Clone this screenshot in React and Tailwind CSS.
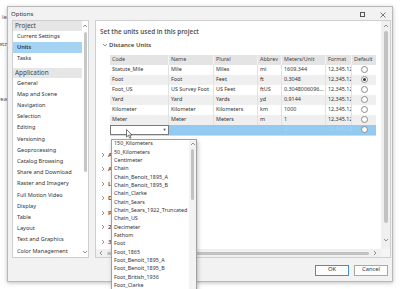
import React from "react";

const navProject = ["Current Settings", "Units", "Tasks"];
const navApp = [
  "General",
  "Map and Scene",
  "Navigation",
  "Selection",
  "Editing",
  "Versioning",
  "Geoprocessing",
  "Catalog Browsing",
  "Share and Download",
  "Raster and Imagery",
  "Full Motion Video",
  "Display",
  "Table",
  "Layout",
  "Text and Graphics",
  "Color Management",
];

const cols = [
  { key: "code", label: "Code", w: "w-[59px]" },
  { key: "name", label: "Name", w: "w-[45px]" },
  { key: "plural", label: "Plural", w: "w-[44px]" },
  { key: "abbr", label: "Abbrev", w: "w-[24px]" },
  { key: "mpu", label: "Meters/Unit", w: "w-[44px]" },
  { key: "fmt", label: "Format", w: "w-[26px]" },
];

const rows = [
  { code: "Statute_Mile", name: "Mile", plural: "Miles", abbr: "mi", mpu: "1609.344" },
  { code: "Foot", name: "Foot", plural: "Feet", abbr: "ft", mpu: "0.3048", def: true },
  { code: "Foot_US", name: "US Survey Foot", plural: "US Feet", abbr: "ftUS", mpu: "0.3048006096..." },
  { code: "Yard", name: "Yard", plural: "Yards", abbr: "yd", mpu: "0.9144" },
  { code: "Kilometer", name: "Kilometer", plural: "Kilometers", abbr: "km", mpu: "1000" },
  { code: "Meter", name: "Meter", plural: "Meters", abbr: "m", mpu: "1" },
];

const otherUnits = ["Angular Units", "Area Units", "Location Units", "Direction Units", "Page Units", "2D Symbol Display Units", "3D Symbol Display Units"];

const dropItems = [
  "150_Kilometers",
  "50_Kilometers",
  "Centimeter",
  "Chain",
  "Chain_Benoit_1895_A",
  "Chain_Benoit_1895_B",
  "Chain_Clarke",
  "Chain_Sears",
  "Chain_Sears_1922_Truncated",
  "Chain_US",
  "Decimeter",
  "Fathom",
  "Foot",
  "Foot_1865",
  "Foot_Benoit_1895_A",
  "Foot_Benoit_1895_B",
  "Foot_British_1936",
  "Foot_Clarke",
];

function Radio({ on }) {
  return (
    <div className="w-[7px] h-[7px] rounded-full border border-[#8a8a8a] bg-white flex items-center justify-center">
      {on && <div className="w-[3px] h-[3px] rounded-full bg-[#333]" />}
    </div>
  );
}

function Chev({ dir, cls = "" }) {
  const d = {
    up: "M1 4 L3 2 L5 4",
    down: "M1 2 L3 4 L5 2",
    left: "M4 1 L2 3 L4 5",
    right: "M2 1 L4 3 L2 5",
  }[dir];
  return (
    <svg width="6" height="6" viewBox="0 0 6 6" className={cls}>
      <path d={d} fill="none" stroke="#777" strokeWidth="0.8" />
    </svg>
  );
}

export default function App() {
  return (
    <div
      className="relative w-[400px] h-[289px] overflow-hidden bg-white flex"
      style={{ fontFamily: "'Noto Sans', 'Open Sans', sans-serif" }}
    >
      {/* app behind the dialog */}
      <div className="w-[7px] shrink-0 overflow-hidden flex flex-col items-end text-[6px] text-[#555] leading-none">
        <div className="h-[14px]" />
        <div>le</div>
        <div className="h-[21px]" />
        <div>atz</div>
        <div className="h-[49px]" />
        <div>rea</div>
      </div>

      {/* dialog */}
      <div className="mt-[6px] w-[386px] h-[276px] shrink-0 bg-[#f2f2f2] border border-[#b9b9b9] shadow-[0_1px_4px_rgba(0,0,0,0.25)] flex flex-col">
        {/* title bar */}
        <div className="h-[13px] flex items-center pt-[2px] pl-[3px] pr-[6px] text-[6px] text-[#333]">
          <span>Options</span>
          <div className="ml-auto flex items-center gap-[15px]">
            <div className="w-[5px] h-[5px] border border-[#555]" />
            <svg width="6" height="6" viewBox="0 0 6 6">
              <path d="M0.5 0.5 L5.5 5.5 M5.5 0.5 L0.5 5.5" stroke="#555" strokeWidth="0.8" />
            </svg>
          </div>
        </div>

        {/* body */}
        <div className="flex pl-[4px] gap-[6px]">
          {/* left nav */}
          <div className="w-[77px] h-[238px] bg-white border border-[#cfcfcf] flex">
            <div className="flex-1 flex flex-col text-[5.6px] text-[#333] leading-none">
              <div className="h-[10px] bg-[#e6e6e6] flex items-center pl-[2px] text-[6.4px] text-[#444]">Project</div>
              {navProject.map((n) => (
                <div
                  key={n}
                  className={`h-[11px] flex items-center pl-[4px] ${n === "Units" ? "bg-[#a5d3f3] font-semibold" : ""}`}
                >
                  {n}
                </div>
              ))}
              <div className="h-[4px]" />
              <div className="h-[10px] bg-[#e6e6e6] flex items-center pl-[2px] text-[6.4px] text-[#444]">Application</div>
              {navApp.map((n) => (
                <div key={n} className="h-[11.25px] flex items-center pl-[4px] whitespace-nowrap">
                  {n}
                </div>
              ))}
            </div>
            <div className="w-[6px] flex flex-col items-center pt-[2px] pb-[2px]">
              <Chev dir="up" />
              <div className="w-[3px] h-[140px] mt-[3px] rounded-full bg-[#c6c6c6]" />
              <div className="flex-1" />
              <Chev dir="down" />
            </div>
          </div>

          {/* right panel */}
          <div className="w-[296px] h-[238px] bg-white border border-[#cfcfcf] flex flex-col">
            <div className="flex flex-1 min-h-0">
              <div className="flex-1 overflow-hidden flex flex-col pl-[4px]">
                <div className="h-[8px]" />
                <div className="text-[6.3px] font-semibold text-[#555] leading-none">Set the units used in this project</div>
                <div className="h-[7px]" />
                <div className="flex items-center gap-[1px] pl-[2px] text-[6px] font-semibold text-[#444] leading-none">
                  <Chev dir="down" />
                  <span>Distance Units</span>
                </div>
                <div className="h-[7px]" />

                {/* table */}
                <div className="ml-[10px] w-[266px] text-[5.4px] text-[#333] leading-none">
                  <div className="h-[10px] flex bg-[#e4e4e4] text-[#444]">
                    {cols.map((c) => (
                      <div key={c.key} className={`${c.w} shrink-0 flex items-center pl-[2px] border-r border-[#f4f4f4]`}>
                        {c.label}
                      </div>
                    ))}
                    <div className="w-[24px] flex items-center pl-[2px]">Default</div>
                  </div>
                  {rows.map((r, i) => (
                    <div key={r.code} className={`h-[10px] flex ${i % 2 ? "bg-[#efefef]" : "bg-white"}`}>
                      {cols.map((c) => (
                        <div
                          key={c.key}
                          className={`${c.w} shrink-0 flex items-center pl-[2px] border-r border-[#e2e2e2] overflow-hidden whitespace-nowrap`}
                        >
                          {c.key === "fmt" ? "12,345.12" : r[c.key]}
                        </div>
                      ))}
                      <div className="w-[24px] flex items-center justify-center">
                        <Radio on={r.def} />
                      </div>
                    </div>
                  ))}
                  <div className="h-[11px] flex bg-[#92cbef] border-b border-[#d8d8d8]">
                    <div className="w-[59px] shrink-0 bg-white border border-[#7a7a7a] flex">
                      <div className="flex-1" />
                      <div className="w-[7px] flex items-center justify-center text-[4px] text-[#444]">▼</div>
                    </div>
                    <div className="w-[45px] shrink-0" />
                    <div className="w-[44px] shrink-0" />
                    <div className="w-[24px] shrink-0" />
                    <div className="w-[44px] shrink-0 flex items-center pl-[2px] text-[#a9d6f2]">0</div>
                    <div className="w-[26px] shrink-0 flex items-center pl-[2px] text-[#a9d6f2]">12,345.12</div>
                    <div className="w-[24px] flex items-center justify-center">
                      <Radio />
                    </div>
                  </div>
                </div>

                <div className="h-[12px]" />
                <div className="flex flex-col text-[6px] font-semibold text-[#444] leading-none">
                  {otherUnits.map((u) => (
                    <div key={u} className="h-[14.5px] flex items-center gap-[2px] pl-[0px] whitespace-nowrap">
                      <Chev dir="right" />
                      <span>{u}</span>
                    </div>
                  ))}
                </div>
              </div>
              {/* vertical scrollbar */}
              <div className="w-[9px] bg-[#f0f0f0] flex flex-col items-center pt-[2px] pb-[6px]">
                <Chev dir="up" />
                <div className="w-[4px] h-[192px] mt-[2px] rounded-full bg-[#c2c2c2]" />
                <div className="flex-1" />
                <Chev dir="down" />
              </div>
            </div>
            {/* horizontal scrollbar */}
            <div className="h-[8px] flex bg-[#f0f0f0]">
              <div className="flex-1 flex items-center pl-[2px] pr-[3px]">
                <Chev dir="left" />
                <div className="ml-[3px] w-[262px] h-[3px] rounded-full bg-[#c2c2c2]" />
                <div className="flex-1" />
                <Chev dir="right" />
              </div>
              <div className="w-[9px] bg-[#f5f5f5]" />
            </div>
          </div>
        </div>

        {/* footer */}
        <div className="flex-1 flex items-center justify-end gap-[5px] pr-[4px] pt-[1px] text-[5.8px] text-[#333]">
          <button className="w-[34px] h-[11px] bg-[#fdfdfd] border border-[#3d8fd8] flex items-center justify-center leading-none">
            OK
          </button>
          <button className="w-[34px] h-[11px] bg-[#fdfdfd] border border-[#a8a8a8] flex items-center justify-center leading-none">
            Cancel
          </button>
        </div>
      </div>

      {/* dropdown list overlay */}
      <div className="absolute left-[111px] top-[139px] w-[86px] h-[152px] bg-white border border-[#a0a0a0] shadow-[1px_2px_4px_rgba(0,0,0,0.25)] flex text-[5.4px] text-[#333] leading-none">
        <div className="flex-1 flex flex-col pl-[2px] overflow-hidden">
          {dropItems.map((d) => (
            <div key={d} className="h-[8.33px] flex items-center whitespace-nowrap shrink-0">
              {d}
            </div>
          ))}
        </div>
        <div className="w-[7px] bg-[#f3f3f3] flex flex-col items-center pt-[1px]">
          <Chev dir="up" />
          <div className="w-[3px] h-[51px] mt-[2px] rounded-full bg-[#c2c2c2]" />
        </div>
      </div>

      {/* mouse pointer */}
      <svg className="absolute left-[126px] top-[129px]" width="7" height="10" viewBox="0 0 7 10">
        <path d="M0.5 0.5 L0.5 8 L2.4 6.3 L3.8 9.3 L5 8.8 L3.6 5.9 L6 5.9 Z" fill="white" stroke="#222" strokeWidth="0.6" />
      </svg>
    </div>
  );
}
